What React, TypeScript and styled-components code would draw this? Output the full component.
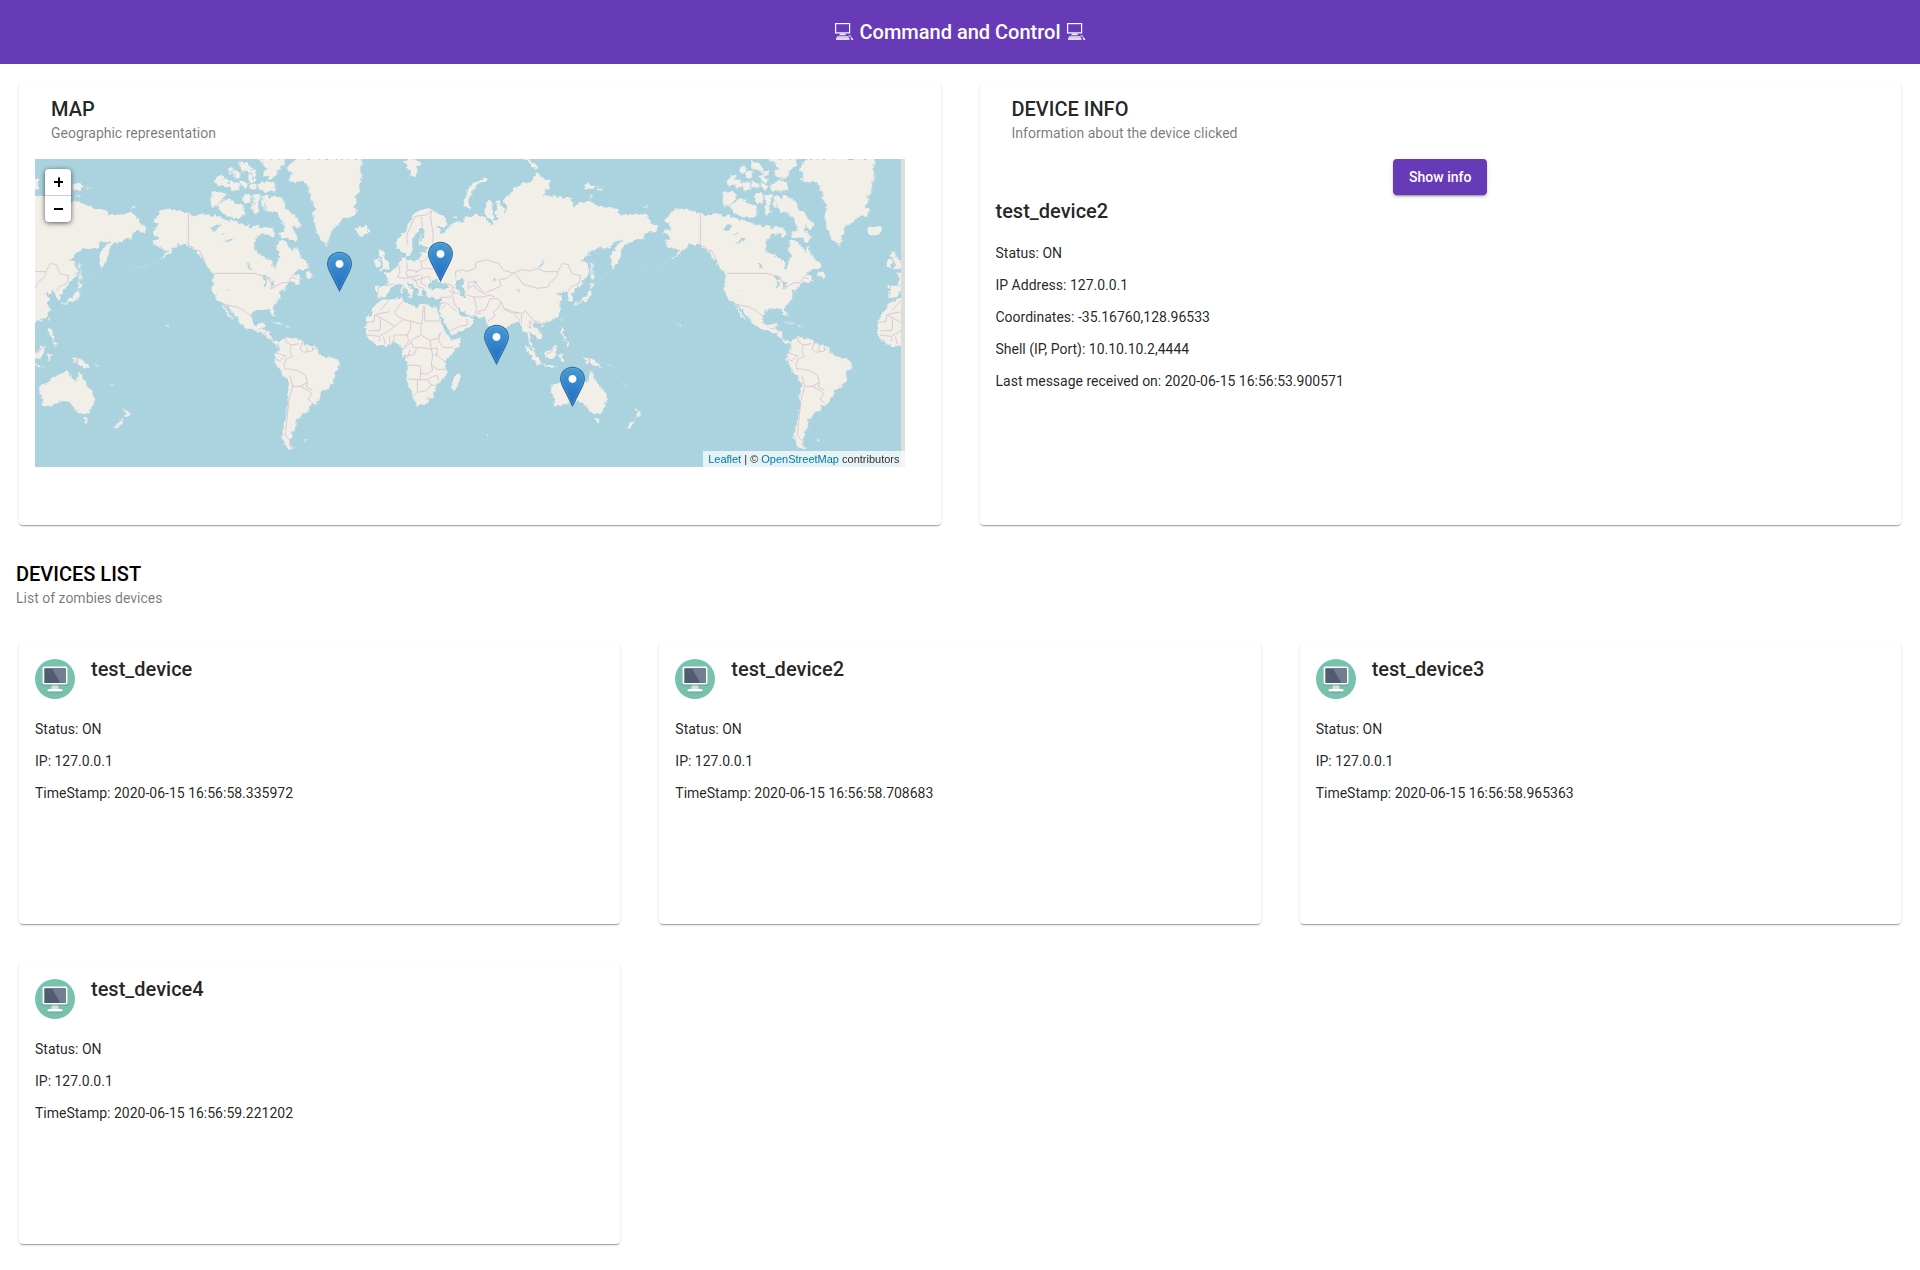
import React from 'react';
import styled, { createGlobalStyle } from 'styled-components';

const GlobalStyle = createGlobalStyle`
  * { box-sizing: border-box; }
  body {
    margin: 0;
    background: #fff;
    font-family: Roboto, "Liberation Sans", sans-serif;
    font-size: 14px;
    color: #000;
  }
  h1, h2, h3, p { margin: 0; }
`;

const Toolbar = styled.header`
  height: 64px;
  display: flex;
  align-items: center;
  justify-content: center;
  background: #673ab7;
  color: #fff;
`;

const ToolbarTitle = styled.h1`
  display: flex;
  align-items: center;
  gap: 5px;
  font-size: 20px;
  font-weight: 500;
  line-height: 32px;
  white-space: nowrap;
`;

const ComputerGlyph = styled.svg`
  width: 20px;
  height: 20px;
`;

const Grid = styled.div<{ $columns: number; $rowHeight: number }>`
  display: grid;
  gap: 1px;
  grid-template-columns: repeat(${(p) => p.$columns}, 1fr);
  grid-auto-rows: ${(p) => p.$rowHeight}px;
`;

const Tile = styled.div`
  display: flex;
  padding: 19px;
`;

const Card = styled.section`
  flex: 1;
  min-width: 0;
  padding: 16px;
  border-radius: 4px;
  background: #fff;
  color: rgba(0, 0, 0, 0.87);
  box-shadow: 0 2px 1px -1px rgba(0, 0, 0, 0.2), 0 1px 1px 0 rgba(0, 0, 0, 0.14),
    0 1px 3px 0 rgba(0, 0, 0, 0.12);
`;

const PanelHeader = styled.div`
  display: flex;
  flex-direction: column;
  gap: 4px;
  padding: 0 16px 16px;
`;

const ListHeader = styled(PanelHeader)`
  padding-top: 20px;
`;

const Title = styled.h2`
  font-size: 20px;
  font-weight: 500;
  line-height: 20px;
`;

const Subtitle = styled.p`
  line-height: 20px;
  color: rgba(0, 0, 0, 0.54);
`;

const ButtonRow = styled.div`
  display: flex;
  justify-content: center;
`;

const RaisedButton = styled.button`
  height: 36px;
  padding: 0 16px;
  border: 0;
  border-radius: 4px;
  background: #673ab7;
  color: #fff;
  font: 500 14px/36px Roboto, "Liberation Sans", sans-serif;
  box-shadow: 0 3px 1px -2px rgba(0, 0, 0, 0.2), 0 2px 2px 0 rgba(0, 0, 0, 0.14),
    0 1px 5px 0 rgba(0, 0, 0, 0.12);
`;

const InfoTitle = styled.h2`
  font-size: 20px;
  font-weight: 500;
  line-height: 32px;
  margin-bottom: 16px;
`;

const Lines = styled.div`
  display: flex;
  flex-direction: column;
  gap: 12px;
  line-height: 20px;
`;

const DeviceHeader = styled.div`
  display: flex;
  gap: 16px;
  margin-bottom: 20px;
`;

const Avatar = styled.svg`
  width: 40px;
  height: 40px;
  display: block;
`;

const MapFrame = styled.div`
  position: relative;
  width: 870px;
  height: 308px;
  overflow: hidden;
  background: #ddd;
  font: 11px/16px "Liberation Sans", Arial, sans-serif;
`;

const WorldSvg = styled.svg`
  display: block;
  width: 870px;
  height: 308px;
`;

const ZoomControl = styled.div`
  position: absolute;
  top: 10px;
  left: 10px;
  width: 26px;
  border-radius: 4px;
  box-shadow: 0 1px 5px rgba(0, 0, 0, 0.65);
  background: #fff;
`;

const ZoomButton = styled.div<{ $divider?: boolean }>`
  height: ${(p) => (p.$divider ? 27 : 26)}px;
  border-bottom: ${(p) => (p.$divider ? '1px solid #ccc' : '0')};
  display: flex;
  align-items: center;
  justify-content: center;
  color: #000;
`;

const Attribution = styled.div`
  position: absolute;
  right: 0;
  bottom: 0;
  padding: 0 5.500px 0 5px;
  background: rgba(255, 255, 255, 0.7);
  color: #333;
`;

const AttributionLink = styled.a`
  color: #0078a8;
`;

const Pin = styled.svg`
  position: absolute;
  width: 25px;
  height: 41px;
`;

// Coastlines are kept in units of a third of a pixel; one world is 1536 wide.
const ARCTIC = [
  '38,150 58,142 63,132 82,137 95,150 112,150 118,180 104,190 78,185 58,176 46,164',
  '22,110 45,112 60,120 50,135 35,150 20,155 18,135',
  '28,80 50,58 58,66 44,76 62,74 74,84 100,84 101,104 84,108 76,94 62,96 50,86 38,92',
  '158,12 238,12 236,30 216,48 212,64 196,70 178,60 176,48 192,44 180,32 172,22',
  '160,90 175,84 190,78 210,84 212,106 186,109 164,106',
  '103,18 124,25 138,38 134,52 122,46 108,44',
  '138,48 152,46 154,60 142,62', '128,60 140,64 152,78 136,80',
  '70,38 85,34 84,48 74,56', '88,50 104,54 102,70 90,66',
  '106,78 126,86 124,98 108,94', '134,86 150,90 148,104 136,100',
  '115,120 132,115 138,128 134,146 118,142',
  '144,120 162,116 166,126 156,146 160,172 150,176 142,160 148,142',
  '172,125 185,120 194,132 204,122 218,128 234,138 240,154 262,178 270,186 288,212 278,222 264,206 262,222 278,248 270,260 248,248 230,246 222,236 242,230 238,206 226,186 208,168 192,170 172,154',
  '184,222 200,218 208,236 200,246 190,236',
];

const AMERICAS = [
  '415,158 425,163 440,166 458,172 475,177 490,184 505,180 520,174 532,178 545,186 558,180 575,187 590,197 610,196 628,206 644,212 655,208 662,218 674,214 684,208 690,220 704,216 714,224 722,240 705,236 692,236 680,248 673,262 672,282 682,295 700,302 716,312 726,320 730,340 738,338 740,318 748,306 745,294 738,282 744,268 742,254 756,255 770,265 782,278 788,290 800,274 808,300 822,318 836,326 838,336 822,344 804,346 786,362 798,360 806,364 816,374 798,388 788,378 770,393 765,402 752,412 750,430 740,445 725,458 733,470 735,486 726,480 718,462 700,461 680,465 668,470 661,484 664,500 674,511 688,508 694,503 708,506 701,520 706,527 721,530 720,545 726,556 740,558 747,562 742,568 733,562 722,558 710,543 698,537 685,527 665,525 645,515 630,505 620,488 605,470 590,453 578,445 565,438 555,425 548,408 547,385 551,365 545,352 532,338 522,318 512,306 500,292 490,283 480,275 468,268 452,270 444,265 436,276 426,282 415,296 388,314 404,296 416,284 400,284 388,278 372,270 368,258 385,252 388,245 372,240 365,230 383,222 384,208 368,195 378,185 390,170 402,162',
  '578,448 586,456 596,474 610,494 604,492 588,472',
  '824,364 834,346 842,354 852,368 840,368',
  '718,497 736,500 762,509 746,508', '766,513 784,516 770,518',
  '745,562 752,556 768,546 785,550 800,550 814,554 820,565 836,572 854,574 862,586 866,596 880,604 914,610 929,624 926,640 913,655 911,680 899,697 876,706 869,725 856,746 836,752 832,770 814,777 812,788 796,794 798,820 786,832 788,848 778,858 780,872 797,880 779,883 764,870 757,850 758,830 766,800 771,762 777,700 777,678 756,658 742,632 731,615 736,598 747,585',
  '799,12 784,24 768,42 788,56 776,74 800,82 816,78 830,90 838,112 845,140 856,162 848,176 850,200 860,230 868,252 885,265 892,277 898,250 909,216 934,205 941,190 974,181 984,168 968,156 980,144 976,126 990,112 988,86 998,68 993,40 999,12',
  '820,855 831,852 826,860', '409,508 416,512 411,515', '303,157 318,152 312,160',
];

const PACIFIC = [
  '25,700 32,690 56,682 70,662 82,660 95,654 108,648 121,655 120,668 138,682 144,664 148,643 155,665 166,682 176,696 192,715 196,735 186,755 180,772 160,775 142,770 130,750 126,756 118,740 95,738 70,750 50,752 35,755 38,735 28,715',
  '160,788 174,791 169,803 163,800',
  '278,756 288,768 302,772 290,788 282,786 286,774',
  '284,788 276,800 264,820 252,820 264,804',
  '120,605 142,608 158,616 168,628 184,640 162,636 150,628 126,624 134,616',
  '190,624 204,630 212,638', '240,684 256,692 246,690',
  '144,380 162,388 150,394 148,402 142,396',
  '144,402 148,416 142,434 134,442 116,438 100,454 98,446 118,434 132,424 138,412',
  '146,316 152,330 150,356 158,366 150,380 147,350',
];

const OLD_WORLD = [
  '322,160 340,168 362,178 380,194 382,210 370,218 352,212 362,226 364,238 376,230 384,214 400,205 415,198 430,204 434,188 450,186 470,178 488,184 502,195 512,213 520,206 514,192 496,184 494,165 505,135 515,140 518,165 522,190 532,198 527,170 532,150 524,142 534,134 545,150 558,172 562,152 550,134 572,115 586,96 606,85 634,82 640,62 655,54 664,70 688,78 692,98 665,120 700,122 730,130 755,127 760,155 780,142 805,138 830,148 860,158 892,162 902,178 926,180 950,178 968,172 986,185 998,206 1016,215 1008,232 991,228 974,235 971,254 951,252 936,262 916,266 904,282 902,304 890,328 878,342 873,320 876,294 891,275 906,254 882,262 866,280 826,280 806,295 786,318 800,322 806,334 806,358 786,385 766,403 757,418 759,438 746,436 744,420 736,405 722,416 711,418 726,432 716,444 726,464 712,490 681,502 660,506 644,500 635,508 642,517 660,528 668,546 652,556 646,542 632,530 628,548 634,566 648,586 640,584 626,560 622,532 612,528 604,514 590,500 574,506 560,518 546,534 538,564 528,552 516,520 500,506 492,488 470,486 448,480 434,474 418,458 411,458 424,480 432,490 445,484 463,496 448,518 420,532 394,540 386,524 372,498 357,472 360,448 362,428 340,430 322,424 318,408 305,402 306,424 296,420 290,405 275,390 260,376 264,388 280,408 272,424 264,408 248,396 238,386 220,390 206,408 196,426 178,428 168,424 168,392 200,392 204,374 194,356 212,350 232,332 245,320 244,306 256,304 260,318 278,320 300,316 304,292 318,286 328,276 304,272 296,262 298,246 312,226 310,218 298,224 284,242 278,258 280,276 270,302 260,306 254,290 242,292 230,278 228,260 242,244 260,225 268,200 284,180 300,166',
  '182,438 200,433 235,426 250,427 248,440 275,453 292,460 296,448 315,450 350,456 354,474 364,506 376,532 388,548 402,554 425,546 420,566 402,590 384,608 374,625 380,640 378,665 355,685 345,705 340,722 325,740 304,750 288,752 282,728 274,704 258,672 264,644 260,618 248,602 247,582 238,566 220,562 205,572 175,574 155,560 142,545 136,525 138,495 155,470 168,450',
  '416,654 422,664 408,705 397,708 394,690 402,670',
  '178,286 192,288 190,302 204,322 212,338 192,345 180,346 192,332 184,314 178,300',
  '165,318 176,310 180,324 176,336 164,334',
  '105,222 118,214 142,214 149,228 130,243 112,236',
  '495,66 501,74 472,88 454,112 444,138 452,162 430,152 432,132 448,96 470,78',
  '252,20 272,12 290,14 308,28 292,30 294,46 280,72 268,46',
  '608,12 630,12 636,22 655,30 650,42 634,38 630,24', '790,90 806,84 825,94 820,104 798,104', '832,96 850,102 838,104',
  '806,120 818,122 812,128', '396,182 412,182 404,190',
  '612,572 626,580 648,600 662,618 658,630 644,620 628,596',
  '660,626 690,630 716,637 690,636', '672,594 688,590 704,570 713,574 706,594 700,613 678,610',
  '716,600 732,596 724,606 732,616 722,618', '720,516 731,520 732,544 722,534', '736,560 748,566 740,576',
  '720,490 727,486 722,500', '666,510 676,508 670,516', '242,398 250,396 248,418 242,416', '262,424 276,424 272,432',
  '306,432 318,432 310,435', '728,540 740,548 736,558 728,550', '500,838 507,838 504,844',
];

const INLAND_WATER = [
  '326,396 332,380 346,376 352,386 362,378 372,388 386,396 384,403 356,400 336,404',
  '408,378 424,372 436,374 430,386 424,388 430,402 438,408 436,426 420,426 416,406 408,396',
  '300,245 312,232 308,256 300,266', '518,374 534,374 526,378', '652,336 666,326 674,310 672,324 660,338',
  '588,408 596,404 596,410', '344,598 354,598 350,606 342,604', '463,378 474,374 470,384',
];

const NA_LAKES = [
  '542,220 562,208 574,212 560,226 548,228', '580,264 600,252 616,250 596,262', '646,322 656,324 664,346 656,342',
  '694,366 706,362 722,372 704,372', '704,378 712,376 708,398 702,396', '722,376 736,384 730,398 724,392',
  '594,402 600,402 598,407', '570,236 590,232 578,240', '704,134 708,160 702,160',
];

const OLD_BORDERS =
  'M262,268 260,240 285,184 318,180 334,168 332,190 340,240 338,266 M304,186 308,216 M302,290 328,292 322,308 312,320 304,316 M302,316 306,340 292,350 270,344 258,350 262,366 282,364 300,360 M236,330 240,352 232,366 252,370 270,368 284,378 300,372 326,364 332,378 M306,340 340,342 M280,364 288,380 296,396 312,400 M308,360 302,384 320,394 M176,396 172,424 M200,392 222,386 M260,322 262,344 M286,356 294,346 M372,384 396,392 410,402 M386,406 402,414 418,416 M394,396 404,412 M362,428 392,426 402,412 M398,424 404,450 416,462 M362,446 380,442 400,462 410,468 M366,470 M378,448 364,462 M390,528 420,514 442,510 440,490 M408,370 406,350 430,344 440,350 466,340 468,322 502,314 520,322 536,324 550,346 580,354 562,370 538,374 544,392 520,404 506,408 496,418 472,404 460,390 444,402 M444,400 446,380 462,382 492,412 M438,420 462,426 488,426 510,420 524,426 M462,426 470,458 466,474 484,476 M472,470 496,464 510,432 530,430 542,440 536,458 520,470 524,484 502,500 M542,440 552,460 580,470 606,476 616,468 634,488 640,498 658,500 M550,462 576,474 594,474 M584,480 600,498 M604,480 604,506 M582,354 606,344 630,348 654,340 672,350 714,350 710,366 690,382 684,396 654,400 610,388 592,364 582,354 M714,350 726,326 744,328 756,356 782,362 776,386 754,394 744,410 M622,512 632,520 628,498 644,510 654,520 662,536 M640,516 658,518 M630,572 640,572 M680,596 692,592 704,576 M808,606 808,634';

const AFRICA_BORDERS =
  'M180,466 206,438 M166,478 210,470 M138,502 162,500 164,480 182,488 M182,488 224,514 250,494 226,478 226,466 248,440 M250,494 272,498 M272,498 306,508 310,452 M314,454 314,498 358,498 M182,488 180,526 144,528 M144,540 160,542 178,544 178,560 M178,544 206,528 224,514 M190,544 196,568 M208,544 210,566 M222,540 222,562 M222,540 262,540 272,522 272,498 M262,540 266,560 246,584 M272,556 304,540 302,512 M306,542 330,556 354,550 366,530 M274,560 250,584 M274,560 280,578 306,578 334,582 352,578 M358,534 356,560 372,578 400,578 M352,578 350,600 378,622 M334,582 338,600 334,628 338,646 320,658 302,654 302,632 262,630 M334,628 352,644 378,642 M260,672 300,674 302,654 M300,674 322,674 338,664 352,662 356,676 M292,674 292,710 278,724 M322,674 334,690 320,706 296,712 M334,690 348,692 M328,726 320,730 328,734 M270,584 262,610 M250,602 282,600 290,580 M330,556 334,582';

const AMERICAS_BORDERS =
  'M475,177 475,272 488,276 500,288 508,286 524,316 M554,355 672,355 M672,355 696,362 712,364 726,388 722,402 754,384 776,382 784,366 800,372 M578,446 600,452 622,456 640,466 652,476 662,482 M686,522 700,518 M696,540 712,530 M768,546 768,560 784,570 808,566 M784,570 780,590 788,604 768,612 762,630 764,642 782,642 M738,612 750,618 764,602 M736,592 770,604 M818,560 810,580 820,592 846,588 856,578 M830,574 832,590 M846,574 848,588 M782,642 804,648 826,660 832,682 812,694 788,694 780,662 M812,694 832,704 846,716 834,732 850,746 M832,682 830,696 848,706 M788,694 776,740 770,800 766,840 784,862 M784,862 786,880';

interface ShapesProps {
  list: string[];
  dx?: number;
}

const Shapes = ({ list, dx = 0 }: ShapesProps) => (
  <g transform={`translate(${dx} 0)`}>
    {list.map((points) => (
      <polygon key={points} points={points} />
    ))}
  </g>
);

const WATER = '#aad3df';
const LAND = '#f2efe9';

const WorldMap = () => (
  <WorldSvg viewBox="0 0 2610 924">
    <defs>
      <filter id="coast" filterUnits="userSpaceOnUse" x="0" y="0" width="2610" height="924" colorInterpolationFilters="sRGB">
        <feTurbulence type="fractalNoise" baseFrequency="0.07" numOctaves="3" seed="4" result="noise" />
        <feDisplacementMap in="SourceGraphic" in2="noise" scale="17" xChannelSelector="R" yChannelSelector="G" />
      </filter>
      <clipPath id="tiles">
        <rect width="2598" height="924" />
      </clipPath>
      <g id="americas">
        <g fill={LAND}>
          <Shapes list={AMERICAS} />
          <g stroke={LAND} strokeWidth="3">
            <Shapes list={ARCTIC} dx={525} />
          </g>
          <Shapes list={PACIFIC} />
        </g>
        <g fill={WATER}>
          <Shapes list={NA_LAKES} />
        </g>
        <path
          d="M300,332 Q350,350 400,306 M160,384 Q185,368 205,346"
          fill="none"
          stroke={LAND}
          strokeWidth="2"
          strokeDasharray="5 6"
          opacity="0.6"
        />
      </g>
      <g id="oldworld">
        <g fill={LAND}>
          <Shapes list={OLD_WORLD} />
        </g>
        <g fill={WATER}>
          <Shapes list={INLAND_WATER} />
        </g>
      </g>
      <g id="oldborders" fill="none" stroke="#d4c4d0" strokeWidth="2.6">
        <path d={OLD_BORDERS} />
        <path d={AFRICA_BORDERS} />
      </g>
      <g id="newborders" fill="none" stroke="#d4c4d0" strokeWidth="2.6">
        <path d={AMERICAS_BORDERS} />
        <path d="M142,608 142,636" />
      </g>
    </defs>
    <g clipPath="url(#tiles)">
      <rect width="2598" height="924" fill={WATER} />
      <rect y="585" width="2598" height="2" fill="#b1d4da" />
      <g filter="url(#coast)">
        {[-681, 855, 2391].map((x) => (
          <use key={x} href="#oldworld" x={x} y={-12} />
        ))}
        {[-15, 1521].map((x) => (
          <use key={x} href="#americas" x={x} y={-12} />
        ))}
      </g>
      {[-681, 855, 2391].map((x) => (
        <use key={x} href="#oldborders" x={x} y={-12} />
      ))}
      {[-15, 1521].map((x) => (
        <use key={x} href="#newborders" x={x} y={-12} />
      ))}
    </g>
  </WorldSvg>
);

const pins = [
  { left: 292, top: 92 },
  { left: 393, top: 82 },
  { left: 449, top: 165 },
  { left: 525, top: 207 },
];

const MapPin = ({ left, top }: { left: number; top: number }) => (
  <Pin viewBox="0 0 25 41" style={{ left, top }}>
    <defs>
      <linearGradient id="pinFill" x1="0" y1="0" x2="0" y2="1">
        <stop offset="0" stopColor="#489bd2" />
        <stop offset="0.7" stopColor="#2a78c8" />
        <stop offset="1" stopColor="#2a70c8" />
      </linearGradient>
    </defs>
    <g transform="translate(0 0.7) scale(1 0.98)">
      <path
        d="M12.5 .6C5.8 .6 .6 5.9 .6 12.4c0 3.6 1.3 6.3 3 9.700L12.500 40l8.900-17.900c1.700-3.400 3-6.100 3-9.700C24.400 5.900 19.200.6 12.500.6z"
        fill="url(#pinFill)"
        stroke="#2e6f9f"
        strokeWidth="1.1"
      />
      <path
        d="M12.5 1.700C6.400 1.700 1.700 6.500 1.700 12.400c0 3.300 1.200 5.900 2.900 9.200L12.500 37.500l7.900-15.900c1.700-3.300 2.900-5.900 2.900-9.200C23.300 6.500 18.600 1.700 12.500 1.700z"
        fill="none"
        stroke="#fff"
        strokeOpacity="0.12"
      />
      <circle cx="12.500" cy="12.500" r="4.500" fill="#fff" stroke="#2f77b0" strokeWidth="0.900" />
    </g>
  </Pin>
);

// Desktop computer with keyboard and mouse, as drawn in the toolbar title.
const DesktopGlyph = () => (
  <ComputerGlyph viewBox="0 0 20 20" aria-hidden="true">
    <rect x="1.600" y="1.600" width="14" height="9.300" fill="none" stroke="#fff" strokeWidth="1.200" />
    <path d="M6 11.500h5.200l.8 1.700H5.200z" fill="#fff" opacity="0.9" />
    <path d="M3.400 14h10.800l1 2H2.400z" fill="#fff" opacity="0.7" />
    <path d="M2 16h13.400v2H2z" fill="#fff" opacity="0.8" />
    <path d="M14.600 13.600l2 .6.6 1.400" fill="none" stroke="#fff" strokeWidth="0.900" />
    <path d="M16.600 15.600l1.800.4.900 1.800-1.700.3z" fill="#fff" />
  </ComputerGlyph>
);

const ComputerAvatar = () => (
  <Avatar viewBox="0 0 40 40">
    <circle cx="20" cy="20" r="20" fill="#76c2af" />
    <path d="M17 26h6l1 5h-8z" fill="#e0e0d1" />
    <rect x="7.500" y="8.600" width="25" height="18" rx="1.800" fill="#5e9b8c" />
    <rect x="7.500" y="7.400" width="25" height="18.200" rx="1.800" fill="#fff" />
    <rect x="9.300" y="9.200" width="21.400" height="14.800" fill="#4f5d73" />
    <path d="M16.800 9.200h13.900V24h-5.300z" fill="#727d8f" />
    <rect x="12.500" y="31" width="15" height="2.600" rx="1.200" fill="#5e9b8c" />
    <rect x="12.500" y="30" width="15" height="2.600" rx="1.200" fill="#fff" />
  </Avatar>
);

const devices = [
  { name: 'test_device', stamp: '2020-06-15 16:56:58.335972' },
  { name: 'test_device2', stamp: '2020-06-15 16:56:58.708683' },
  { name: 'test_device3', stamp: '2020-06-15 16:56:58.965363' },
  { name: 'test_device4', stamp: '2020-06-15 16:56:59.221202' },
];

const infoLines = [
  'Status: ON',
  'IP Address: 127.0.0.1',
  'Coordinates: -35.16760,128.96533',
  'Shell (IP, Port): 10.10.10.2,4444',
  'Last message received on: 2020-06-15 16:56:53.900571',
];

const App = () => (
  <>
    <GlobalStyle />
    <Toolbar>
      <ToolbarTitle>
        <DesktopGlyph />
        Command and Control
        <DesktopGlyph />
      </ToolbarTitle>
    </Toolbar>
    <Grid $columns={2} $rowHeight={480}>
      <Tile>
        <Card>
          <PanelHeader>
            <Title>MAP</Title>
            <Subtitle>Geographic representation</Subtitle>
          </PanelHeader>
          <MapFrame>
            <WorldMap />
            {pins.map((pin) => (
              <MapPin key={pin.left} {...pin} />
            ))}
            <ZoomControl>
              <ZoomButton $divider>
                <svg width="10" height="10" viewBox="0 0 10 10">
                  <path d="M6 0.500v9.500M1 5h9" stroke="#000" strokeWidth="2" />
                </svg>
              </ZoomButton>
              <ZoomButton>
                <svg width="10" height="10" viewBox="0 0 10 10">
                  <path d="M1 5h9" stroke="#000" strokeWidth="2" />
                </svg>
              </ZoomButton>
            </ZoomControl>
            <Attribution>
              <AttributionLink>Leaflet</AttributionLink> | © <AttributionLink>OpenStreetMap</AttributionLink> contributors
            </Attribution>
          </MapFrame>
        </Card>
      </Tile>
      <Tile>
        <Card>
          <PanelHeader>
            <Title>DEVICE INFO</Title>
            <Subtitle>Information about the device clicked</Subtitle>
          </PanelHeader>
          <ButtonRow>
            <RaisedButton>Show info</RaisedButton>
          </ButtonRow>
          <InfoTitle>test_device2</InfoTitle>
          <Lines>
            {infoLines.map((line) => (
              <p key={line}>{line}</p>
            ))}
          </Lines>
        </Card>
      </Tile>
    </Grid>
    <ListHeader>
      <Title>DEVICES LIST</Title>
      <Subtitle>List of zombies devices</Subtitle>
    </ListHeader>
    <Grid $columns={3} $rowHeight={319}>
      {devices.map((device) => (
        <Tile key={device.name}>
          <Card>
            <DeviceHeader>
              <ComputerAvatar />
              <Title>{device.name}</Title>
            </DeviceHeader>
            <Lines>
              <p>Status: ON</p>
              <p>IP: 127.0.0.1</p>
              <p>TimeStamp: {device.stamp}</p>
            </Lines>
          </Card>
        </Tile>
      ))}
    </Grid>
  </>
);

export default App;
